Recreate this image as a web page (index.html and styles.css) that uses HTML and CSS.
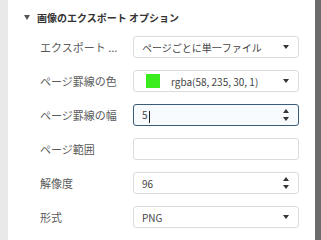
FILE: index.html
```html
<!DOCTYPE html>
<html>
<head>
    <title>Image Export Options</title>
    <link rel="stylesheet" href="styles.css">
</head>
<body>
    <div class="page">
        <div class="strip"></div>
        <div class="panel">
            <div class="section-head">
                <span class="toggle"></span>
                <span class="section-title">画像のエクスポート オプション</span>
            </div>
            <div class="rows">
                <div class="row">
                    <div class="label">エクスポート ...</div>
                    <div class="field select">
                        <span class="value">ページごとに単一ファイル</span>
                        <span class="arrow"></span>
                    </div>
                </div>
                <div class="row">
                    <div class="label">ページ罫線の色</div>
                    <div class="field select">
                        <span class="swatch"></span>
                        <span class="value">rgba(58, 235, 30, 1)</span>
                        <span class="arrow"></span>
                    </div>
                </div>
                <div class="row">
                    <div class="label">ページ罫線の幅</div>
                    <div class="field number focused">
                        <span class="value">5<span class="caret"></span></span>
                        <span class="spin"><span class="up"></span><span class="down"></span></span>
                    </div>
                </div>
                <div class="row">
                    <div class="label">ページ範囲</div>
                    <div class="field"></div>
                </div>
                <div class="row">
                    <div class="label">解像度</div>
                    <div class="field number">
                        <span class="value">96</span>
                        <span class="spin"><span class="up"></span><span class="down"></span></span>
                    </div>
                </div>
                <div class="row">
                    <div class="label">形式</div>
                    <div class="field select">
                        <span class="value">PNG</span>
                        <span class="arrow"></span>
                    </div>
                </div>
            </div>
        </div>
        <div class="scrollbar"></div>
    </div>
</body>
</html>
```

FILE: styles.css
```css
body {
    margin: 0;
    padding: 0;
    background: #ffffff;
    font-family: "Noto Sans CJK JP", "Noto Sans", sans-serif;
    font-size: 11px;
    color: #555;
}
.page {
    display: flex;
    height: 240px;
    overflow: hidden;
}
.strip {
    width: 8px;
    background: #e9e9e9;
}
.panel {
    flex: 1;
    padding: 0 16px 0 16px;
}
.scrollbar {
    width: 6px;
    background: #6b6b6b;
}
.section-head {
    display: flex;
    align-items: center;
    height: 34px;
}
.toggle {
    width: 0;
    height: 0;
    border-left: 3px solid transparent;
    border-right: 3px solid transparent;
    border-top: 5px solid #555;
    margin-right: 7px;
}
.section-title {
    font-size: 10px;
    font-weight: bold;
    color: #333;
}
.rows {
    display: flex;
    flex-direction: column;
    gap: 12px;
    margin-top: 2px;
    padding-left: 16px;
}
.row {
    display: flex;
    align-items: center;
    height: 22px;
}
.label {
    width: 93px;
    color: #5a5a5a;
    white-space: nowrap;
}
.field {
    box-sizing: border-box;
    width: 166px;
    height: 22px;
    border: 1px solid #dcdcdc;
    border-radius: 3px;
    display: flex;
    align-items: center;
    padding: 0 9px 0 8px;
    font-size: 10px;
    color: #444;
}
.field .value {
    flex: 1;
    white-space: nowrap;
}
.focused {
    border-color: #3b5b7a;
    background: #f8fbfe;
}
.caret {
    display: inline-block;
    width: 1px;
    height: 12px;
    background: #222;
    vertical-align: middle;
    margin-left: 1px;
}
.arrow {
    width: 0;
    height: 0;
    border-left: 3.5px solid transparent;
    border-right: 3.5px solid transparent;
    border-top: 4px solid #333;
}
.swatch {
    width: 14px;
    height: 14px;
    background: rgb(58, 235, 30);
    margin: 0 11px 0 4px;
}
.spin {
    display: flex;
    flex-direction: column;
    gap: 4px;
}
.spin .up {
    width: 0;
    height: 0;
    border-left: 3.5px solid transparent;
    border-right: 3.5px solid transparent;
    border-bottom: 4px solid #333;
}
.spin .down {
    width: 0;
    height: 0;
    border-left: 3.5px solid transparent;
    border-right: 3.5px solid transparent;
    border-top: 4px solid #333;
}
```
